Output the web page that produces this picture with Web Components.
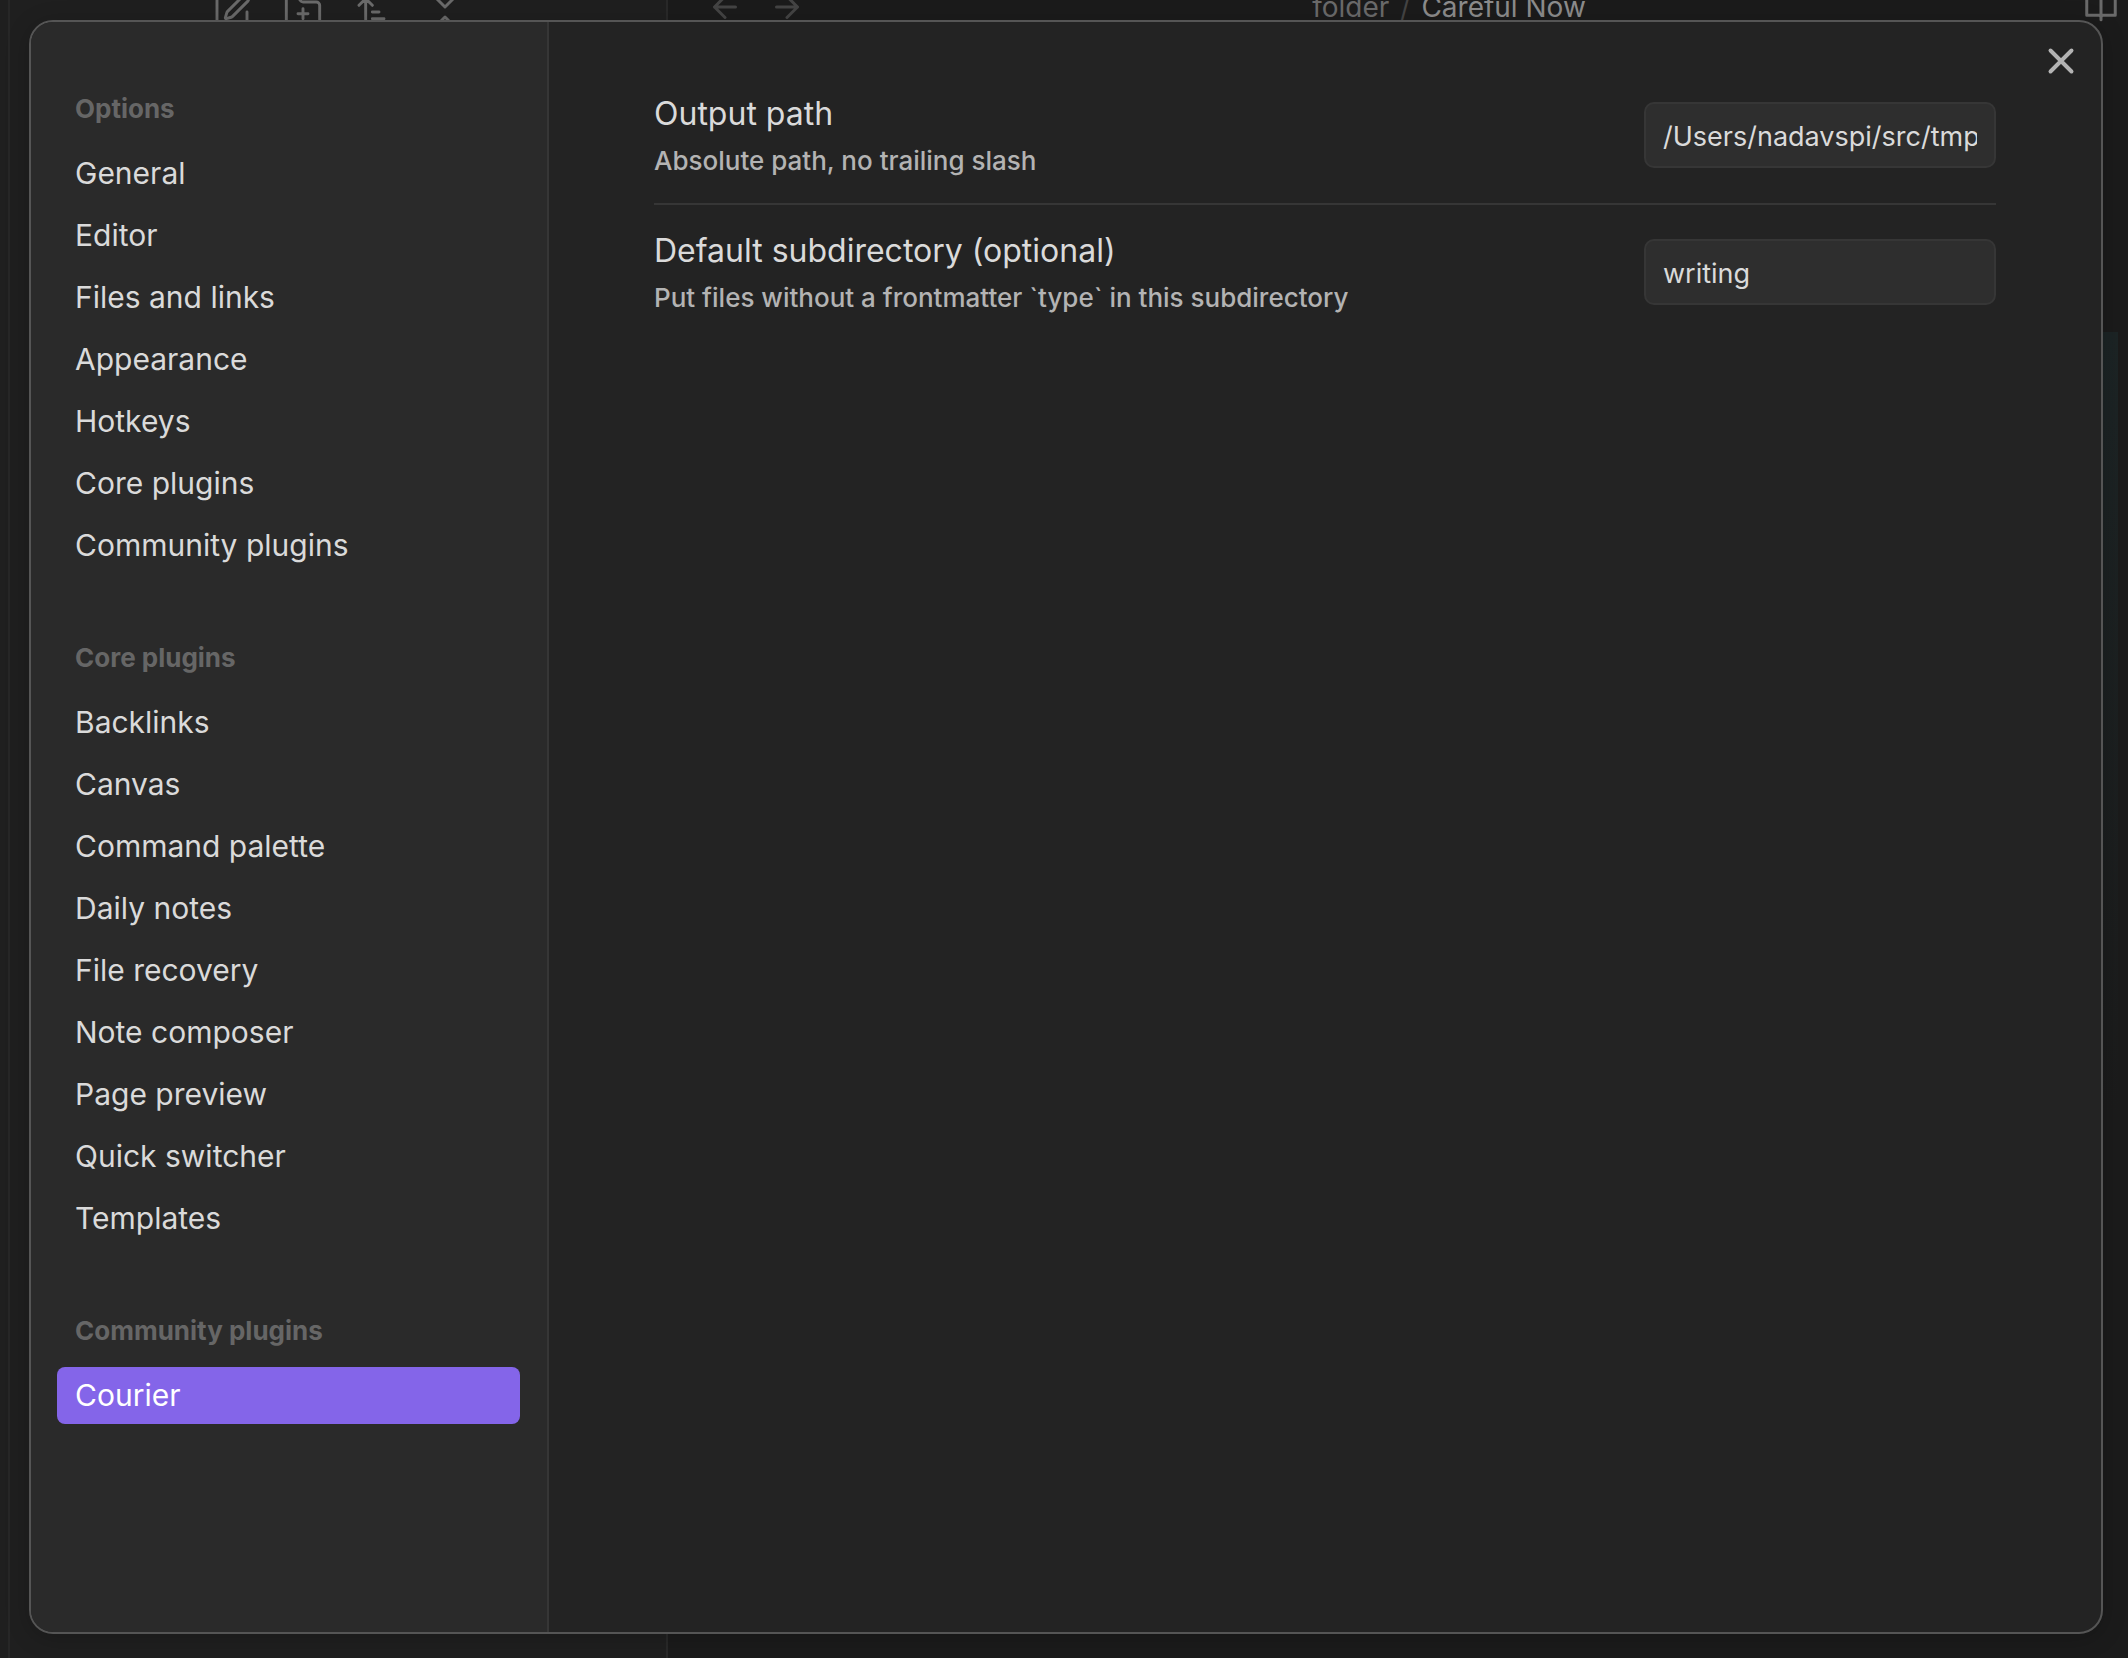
<!DOCTYPE html>
<html lang="en">
<head>
<meta charset="utf-8">
<title>Settings</title>
<style>
  html, body { height: 100%; margin: 0; }
  body { background: #1b1b1b; font-family: Inter, "Liberation Sans", sans-serif; overflow: hidden; }
</style>
</head>
<body>
<vault-app></vault-app>

<template id="t-vault-app">
  <style>
    :host { display: grid; height: 100%; }
    :host > * { grid-area: 1 / 1; min-width: 0; min-height: 0; }
    .layer { display: flex; padding: 20px 25px 24px 29px; }
    settings-modal { flex: 1; }
  </style>
  <vault-workspace></vault-workspace>
  <div class="layer">
    <settings-modal>
      <nav-section slot="nav" heading="Options">
        <nav-item>General</nav-item>
        <nav-item>Editor</nav-item>
        <nav-item>Files and links</nav-item>
        <nav-item>Appearance</nav-item>
        <nav-item>Hotkeys</nav-item>
        <nav-item>Core plugins</nav-item>
        <nav-item>Community plugins</nav-item>
      </nav-section>
      <nav-section slot="nav" heading="Core plugins">
        <nav-item>Backlinks</nav-item>
        <nav-item>Canvas</nav-item>
        <nav-item>Command palette</nav-item>
        <nav-item>Daily notes</nav-item>
        <nav-item>File recovery</nav-item>
        <nav-item>Note composer</nav-item>
        <nav-item>Page preview</nav-item>
        <nav-item>Quick switcher</nav-item>
        <nav-item>Templates</nav-item>
      </nav-section>
      <nav-section slot="nav" heading="Community plugins">
        <nav-item active>Courier</nav-item>
      </nav-section>
      <setting-row name="Output path" value="/Users/nadavspi/src/tmp">Absolute path, no trailing slash</setting-row>
      <setting-row name="Default subdirectory (optional)" value="writing">Put files without a frontmatter `type` in this subdirectory</setting-row>
    </settings-modal>
  </div>
</template>

<template id="t-vault-workspace">
  <style>
    :host { display: flex; color: #6a6a6a; overflow: hidden; }
    .ribbon { width: 8px; background: #1f1f1f; border-right: 2px solid #272727; }
    .files { width: 656px; background: #1f1f1f; border-right: 2px solid #292929; }
    .main { flex: 1; display: flex; flex-direction: column; min-width: 0; }
    .tools { display: flex; gap: 31px; margin: -8px 0 0 202px; }
    svg { display: block; fill: none; stroke: currentColor; stroke-width: 2; stroke-linecap: round; stroke-linejoin: round; }
    .tools svg { stroke-width: 1.75; }
    button { all: unset; display: block; }
    .head { display: flex; align-items: center; justify-content: space-between; height: 40px; margin-top: -13px; padding: 0 9px 0 39px; }
    .arrows { display: flex; gap: 26px; padding-right: 10px; color: #444; }
    .crumb { display: flex; gap: 11px; font-size: 28px; line-height: 40px; color: #6a6a6a; white-space: nowrap; }
    .crumb i { font-style: normal; color: #444; }
    .crumb b { font-weight: 400; color: #8c8c8c; }
    .body { flex: 1; display: flex; justify-content: flex-end; padding: 305px 10px 0 0; }
    .scroll { width: 20px; height: 780px; background: linear-gradient(#1c2425, #1b1b1b); }
  </style>
  <div class="ribbon"></div>
  <div class="files">
    <div class="tools">
      <button aria-label="New note"><svg width="40" height="40" viewBox="0 0 24 24"><path d="M12 3H5a2 2 0 0 0-2 2v14a2 2 0 0 0 2 2h14a2 2 0 0 0 2-2v-7"/><path d="M18.375 2.625a1 1 0 0 1 3 3l-9.013 9.014a2 2 0 0 1-.853.505l-2.873.84a.5.5 0 0 1-.62-.62l.84-2.873a2 2 0 0 1 .506-.852z"/></svg></button>
      <button aria-label="New folder"><svg width="40" height="40" viewBox="0 0 24 24"><path d="M12 10v6M9 13h6M20 20a2 2 0 0 0 2-2V8a2 2 0 0 0-2-2h-7.900a2 2 0 0 1-1.700-.9L9.600 3.900A2 2 0 0 0 7.900 3H4a2 2 0 0 0-2 2v13a2 2 0 0 0 2 2z"/></svg></button>
      <button aria-label="Change sort order"><svg width="40" height="40" viewBox="0 0 24 24"><path d="m3 8 4-4 4 4M7 4v16M11 12h4M11 16h7M11 20h10"/></svg></button>
      <button aria-label="Collapse all"><svg width="40" height="40" viewBox="0 0 24 24"><path d="m7 20 5-5 5 5M7 4l5 5 5-5"/></svg></button>
    </div>
  </div>
  <div class="main">
    <div class="head">
      <div class="arrows">
        <button aria-label="Back"><svg width="36" height="36" viewBox="0 0 24 24"><path d="m12 19-7-7 7-7M19 12H5"/></svg></button>
        <button aria-label="Forward"><svg width="36" height="36" viewBox="0 0 24 24"><path d="m12 5 7 7-7 7M5 12h14"/></svg></button>
      </div>
      <div class="crumb"><span>folder</span><i>/</i><b>Careful Now</b></div>
      <button aria-label="Reading view"><svg width="36" height="36" viewBox="0 0 24 24"><path d="M12 5v15.500M12 19a1.500 1.500 0 0 0-1.500-1.500H2.500V3H8a4 4 0 0 1 4 4 4 4 0 0 1 4-4h5.500v14.500h-8A1.500 1.500 0 0 0 12 19"/></svg></button>
    </div>
    <div class="body"><div class="scroll"></div></div>
  </div>
</template>

<template id="t-settings-modal">
  <style>
    :host { position: relative; display: flex; box-sizing: border-box; border: 2px solid #555; border-radius: 24px; background: #232323; overflow: hidden; box-shadow: 0 4px 24px rgba(0,0,0,.2); }
    nav { display: flex; flex-direction: column; gap: 65px; box-sizing: border-box; width: 518px; padding: 68px 27px 0 26px; background: #2a2a2a; border-right: 2px solid #363636; }
    main { flex: 1; min-width: 0; padding: 46px 105px 0 105px; }
    button { all: unset; position: absolute; top: 18px; right: 19px; color: #b3b3b3; }
    svg { display: block; fill: none; stroke: currentColor; stroke-width: 2.25; stroke-linecap: round; }
  </style>
  <nav aria-label="Settings"><slot name="nav"></slot></nav>
  <main><slot></slot></main>
  <button aria-label="Close"><svg width="42" height="42" viewBox="0 0 24 24"><path d="M18 6 6 18M6 6l12 12"/></svg></button>
</template>

<template id="t-nav-section">
  <style>
    :host { display: block; }
    h2 { margin: 0 0 18px; padding: 0 18px; font-size: 26px; line-height: 37px; font-weight: 700; color: #666; }
    div { display: flex; flex-direction: column; gap: 5px; }
  </style>
  <h2></h2>
  <div><slot></slot></div>
</template>

<template id="t-nav-item">
  <style>
    :host { display: block; }
    a { display: block; padding: 0 18px; border-radius: 8px; font-size: 30px; line-height: 57px; color: #dadada; text-decoration: none; white-space: nowrap; }
    :host([active]) a { background: #8465e9; color: #fff; }
  </style>
  <a href="#"><slot></slot></a>
</template>

<template id="t-setting-row">
  <style>
    :host { display: flex; align-items: center; gap: 32px; padding: 24px 0 25px; }
    :host(:not(:last-of-type)) { border-bottom: 2px solid #363636; }
    .info { flex: 1; min-width: 0; }
    label { display: block; margin-bottom: 8px; font-size: 32px; line-height: 44px; color: #dadada; }
    p { margin: 0; font-size: 26px; line-height: 34px; font-weight: 450; color: #b3b3b3; }
    input { box-sizing: border-box; width: 352px; height: 66px; margin: 0; padding: 2px 17px 0; border: 2px solid #363636; border-radius: 10px; background: #2e2e2e; color: #dadada; font: 27px Inter, "Liberation Sans", sans-serif; outline: none; }
  </style>
  <div class="info"><label for="field"></label><p id="desc"><slot></slot></p></div>
  <input id="field" type="text" aria-describedby="desc">
</template>

<script>
  class TemplateElement extends HTMLElement {
    constructor() {
      super();
      const template = document.getElementById('t-' + this.localName);
      this.attachShadow({ mode: 'open' }).append(template.content.cloneNode(true));
    }
  }
  class NavItem extends TemplateElement {
    connectedCallback() {
      if (this.hasAttribute('active')) this.shadowRoot.querySelector('a').setAttribute('aria-current', 'page');
    }
  }
  class NavSection extends TemplateElement {
    connectedCallback() {
      this.shadowRoot.querySelector('h2').textContent = this.getAttribute('heading');
    }
  }
  class SettingRow extends TemplateElement {
    connectedCallback() {
      this.shadowRoot.querySelector('label').textContent = this.getAttribute('name');
      this.shadowRoot.querySelector('input').value = this.getAttribute('value');
    }
  }
  class SettingsModal extends TemplateElement {}
  class VaultWorkspace extends TemplateElement {}
  class VaultApp extends TemplateElement {}

  customElements.define('nav-item', NavItem);
  customElements.define('nav-section', NavSection);
  customElements.define('setting-row', SettingRow);
  customElements.define('settings-modal', SettingsModal);
  customElements.define('vault-workspace', VaultWorkspace);
  customElements.define('vault-app', VaultApp);
</script>
</body>
</html>
